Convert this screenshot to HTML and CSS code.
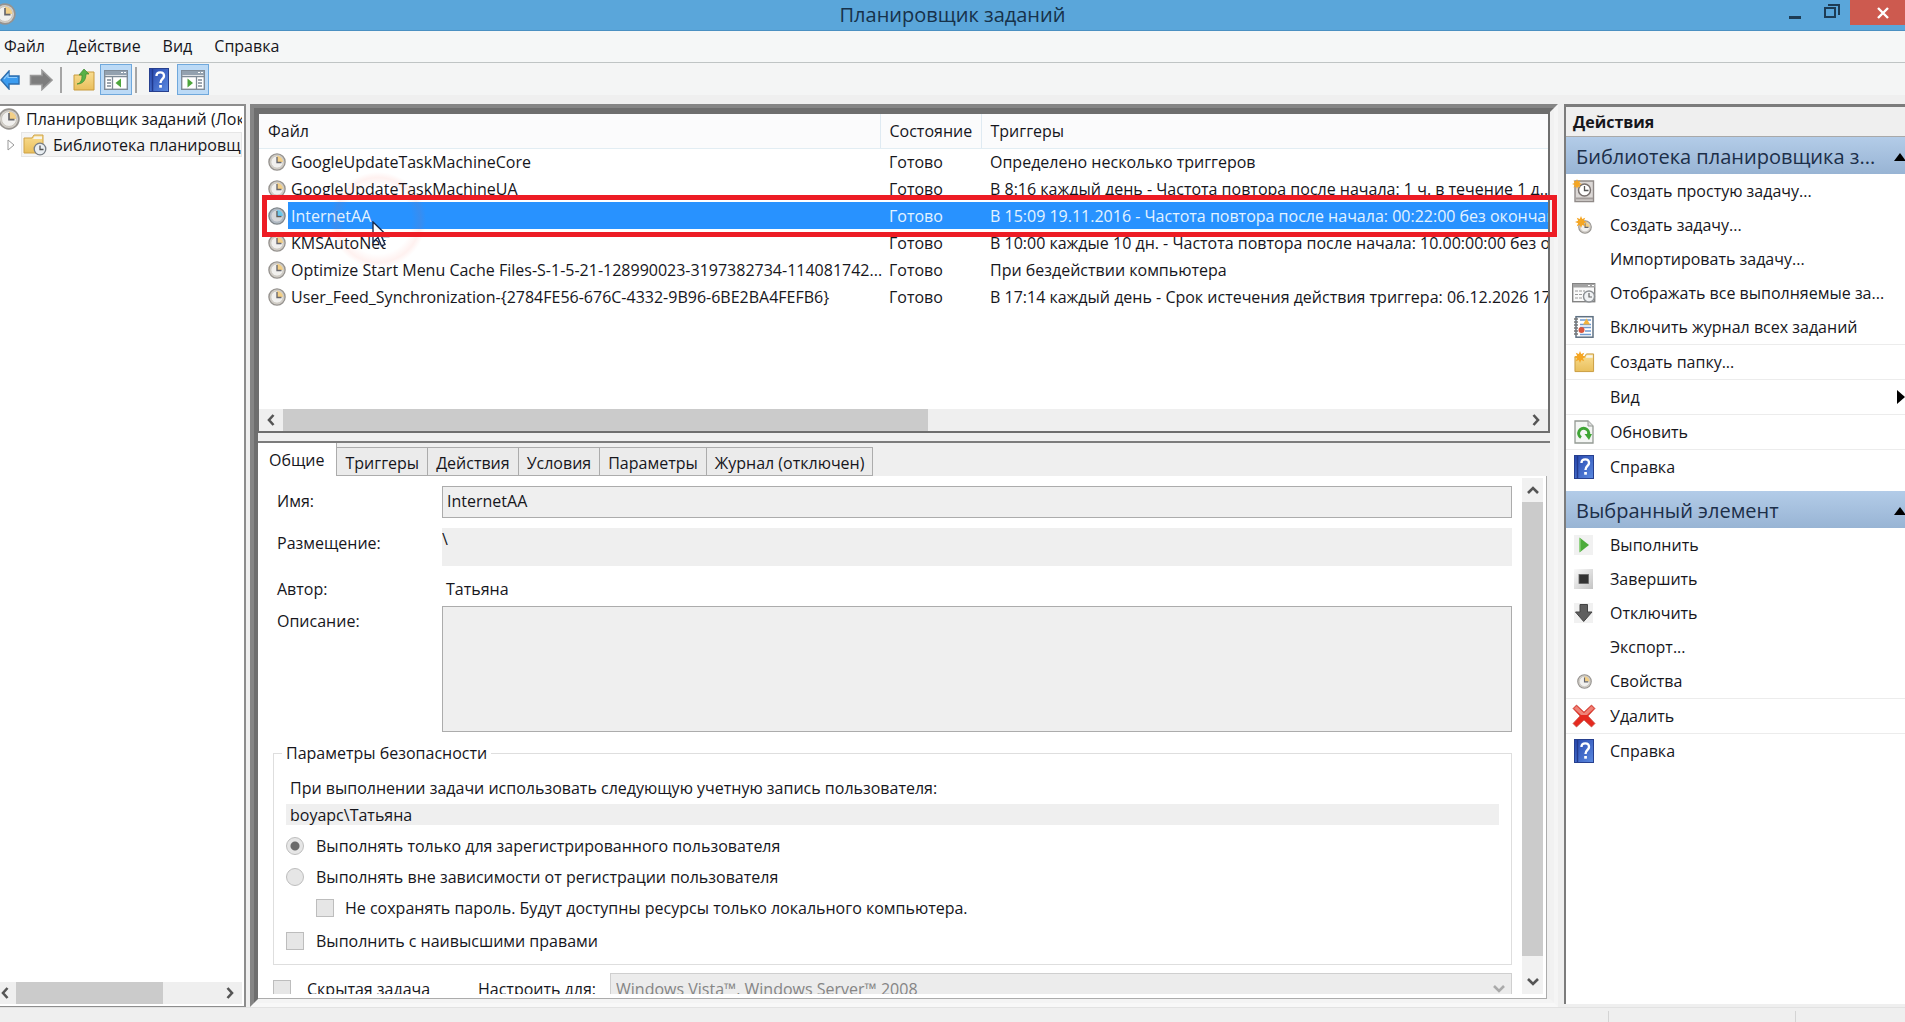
FILE: index.html
```html
<!DOCTYPE html>
<html lang="ru">
<head>
<meta charset="utf-8">
<title>Планировщик заданий</title>
<link rel="stylesheet" href="styles.css">
</head>
<body>
<svg class="sprite" aria-hidden="true">
  <defs>
    <linearGradient id="g-blue" x1="0" y1="0" x2="1" y2="1"><stop offset="0" stop-color="#2747ae"/><stop offset="1" stop-color="#5b8ae0"/></linearGradient>
    <linearGradient id="g-folder" x1="0" y1="0" x2="0" y2="1"><stop offset="0" stop-color="#f9dd90"/><stop offset="1" stop-color="#e9bf5c"/></linearGradient>
    <linearGradient id="g-tile" x1="0" y1="0" x2="1" y2="1"><stop offset="0" stop-color="#fafafa"/><stop offset="1" stop-color="#c4c4c4"/></linearGradient>
    <symbol id="clock" viewBox="0 0 20 20">
      <circle cx="10" cy="10" r="9" fill="#d3cfc9" stroke="#96938f" stroke-width="1.5"/>
      <circle cx="10" cy="10" r="6.8" fill="#f1f0ee" stroke="#c5c1ba" stroke-width=".8"/>
      <path d="M10 10V3.4A6.6 6.6 0 0 1 16.6 10z" fill="#f3cf86"/>
      <path d="M10 4.500V10.500H15" fill="none" stroke="#66666c" stroke-width="1.5"/>
    </symbol>
    <symbol id="star" viewBox="0 0 10 10">
      <path d="M5 0L6 2.600 8.500 1.500 7.400 4 10 5 7.400 6 8.500 8.500 6 7.400 5 10 4 7.400 1.500 8.500 2.600 6 0 5 2.600 4 1.500 1.500 4 2.600z" fill="#f5a623"/>
    </symbol>
    <symbol id="folder" viewBox="0 0 22 22">
      <path d="M1 5H11L13 2H20.500V20.500H1z" fill="url(#g-folder)" stroke="#c89b3e"/>
      <path d="M13.500 3.500H19.500V6H12z" fill="#f6f4ec"/>
    </symbol>
    <symbol id="help" viewBox="0 0 20 24">
      <rect x=".5" y=".5" width="19" height="23" fill="url(#g-blue)" stroke="#27408f"/>
      <path d="M3.500 1V23" stroke="#213a8e" stroke-width="1.500"/>
      <path d="M7.500 8C7.500 3.200 15 3.200 15 8C15 11 11.500 11 11.500 15" fill="none" stroke="#fff" stroke-width="2.400"/>
      <rect x="10.200" y="17" width="2.700" height="2.700" fill="#fff"/>
    </symbol>
    <symbol id="arrow-left" viewBox="0 0 20 20">
      <path d="M1 10L9 1V6H19V14H9V19z" fill="#3b9cf0" stroke="#2c6dae" stroke-width="1.400"/>
      <path d="M4 9L8 4.500V7.500H17" fill="none" stroke="#8fcbfb" stroke-width="1.200"/>
    </symbol>
    <symbol id="arrow-right" viewBox="0 0 24 22">
      <path d="M23 11L13 1.500V6.500H1.500V15.500H13V20.500z" fill="#7d7d7d" stroke="#999" stroke-width="1.600"/>
    </symbol>
    <symbol id="pane-left" viewBox="0 0 24 20">
      <rect x=".7" y=".7" width="22.600" height="18.600" fill="#fff" stroke="#7f8b97" stroke-width="1.400"/>
      <rect x="1" y="1" width="22" height="4" fill="#93a1af"/>
      <path d="M17 2.500H19M20 2.500H22" stroke="#fff"/>
      <path d="M1 6.500H23M8.500 7V19M3 10H7M3 13H7M3 16H7" stroke="#7f8b97" stroke-width="1.300"/>
      <path d="M17 8.500V17.500L11.500 13z" fill="#4ea63c"/>
    </symbol>
    <symbol id="pane-right" viewBox="0 0 24 20">
      <rect x=".7" y=".7" width="22.600" height="18.600" fill="#fff" stroke="#7f8b97" stroke-width="1.400"/>
      <rect x="1" y="1" width="22" height="4" fill="#93a1af"/>
      <path d="M17 2.500H19M20 2.500H22" stroke="#fff"/>
      <path d="M1 6.500H23M15.500 7V19M17 10H21M17 13H21M17 16H21" stroke="#7f8b97" stroke-width="1.300"/>
      <path d="M6.500 8.500V17.500L12 13z" fill="#4ea63c"/>
    </symbol>
    <symbol id="folder-up" viewBox="0 0 22 22">
      <path d="M1 6H11L13 3H21V21H1z" fill="url(#g-folder)" stroke="#c89b3e"/>
      <path d="M4 15C8 14 9 11 9 6H6L11 0 16 5H13C13 11 10 15 4 15z" fill="#58b147" stroke="#3c8b2f" stroke-width=".7"/>
    </symbol>
    <symbol id="folder-clock" viewBox="0 0 24 22">
      <path d="M1 4H9L11 1H20V19H1z" fill="url(#g-folder)" stroke="#cfa347"/>
      <path d="M11.500 2.500H19V5H10z" fill="#f6f4ec"/>
      <circle cx="17" cy="15" r="5.800" fill="#e9eef2" stroke="#777e86" stroke-width="1.300"/>
      <path d="M17 11.500V15.500H20.500" fill="none" stroke="#555" stroke-width="1.300"/>
    </symbol>
    <symbol id="task-basic" viewBox="0 0 24 24">
      <path d="M3 2H21.500V22.500H3z" fill="#dcd8d6" stroke="#908a88" stroke-width="1.400"/>
      <path d="M4 19.500H21" stroke="#a39d9b" stroke-width="2"/>
      <circle cx="12.500" cy="11" r="6" fill="#fff" stroke="#77706e" stroke-width="1.500"/>
      <path d="M12.500 7V11.500H16.500" fill="none" stroke="#555" stroke-width="1.300"/>
      <use href="#star" x="0" y="0" width="10" height="10"/>
    </symbol>
    <symbol id="task-new" viewBox="0 0 24 24">
      <use href="#clock" x="6" y="7" width="14" height="14"/>
      <use href="#star" x="3" y="3" width="12" height="12"/>
    </symbol>
    <symbol id="running" viewBox="0 0 24 24">
      <rect x=".7" y="2.700" width="22" height="18" fill="#fafafa" stroke="#838383" stroke-width="1.400"/>
      <rect x="1" y="3" width="22" height="3.500" fill="#a2a2a2"/>
      <path d="M16 4.500H18M20 4.500H22" stroke="#fff"/>
      <path d="M3 10H13M3 13.500H12M3 17H11" stroke="#999" stroke-width="1.200" stroke-dasharray="3 1"/>
      <circle cx="17" cy="15.500" r="5.500" fill="#f0f2f4" stroke="#8b8f93" stroke-width="1.400"/>
      <path d="M17 12V16H20" fill="none" stroke="#666" stroke-width="1.200"/>
    </symbol>
    <symbol id="journal" viewBox="0 0 24 24">
      <rect x="4" y="1.700" width="17" height="20.500" fill="#fff" stroke="#5f7183" stroke-width="1.500"/>
      <path d="M2 4H6M2 7H6M2 10H6M2 13H6M2 16H6M2 19H6" stroke="#777" stroke-width="1.300"/>
      <path d="M8 5H19M8 9.500H19M8 12.500H19M13 16H19M8 19.500H19" stroke="#6f9bd0" stroke-width="1.300"/>
      <path d="M14.500 3.500L18 9.500H11z" fill="#f4b43c"/>
      <circle cx="9.500" cy="15" r="3" fill="#d9563f"/>
    </symbol>
    <symbol id="folder-new" viewBox="0 0 24 24">
      <use href="#folder" x="2" y="2" width="21" height="21"/>
      <use href="#star" x="2" y="1" width="12" height="12"/>
    </symbol>
    <symbol id="refresh" viewBox="0 0 24 24">
      <path d="M3 1H16L21 6V23H3z" fill="#f4f6f4" stroke="#949a94" stroke-width="1.300"/>
      <path d="M16 1V6H21" fill="#ddd" stroke="#949a94"/>
      <path d="M9 17.500A5 5 0 1 1 16.500 14.500" fill="none" stroke="#3fa535" stroke-width="3"/>
      <path d="M12.500 14H20L17 20z" fill="#3fa535"/>
    </symbol>
    <symbol id="run" viewBox="0 0 24 24">
      <rect x="2" y="2" width="19" height="20" fill="#f1f1f1"/>
      <path d="M7.500 4.500L17 12 7.500 19.500z" fill="#4cab3a"/>
      <path d="M8 5.500V18.500" stroke="#8ed57e" stroke-width="1.200"/>
    </symbol>
    <symbol id="stop" viewBox="0 0 24 24">
      <rect x="2" y="2" width="19" height="20" fill="url(#g-tile)"/>
      <rect x="7" y="7.500" width="9.500" height="9" fill="#333" stroke="#666" stroke-width=".8"/>
    </symbol>
    <symbol id="disable" viewBox="0 0 24 24">
      <rect x="2" y="2" width="19" height="20" fill="#f1f1f1"/>
      <path d="M8 3.500H15.500V11H20L11.700 20.500 3.500 11H8z" fill="#5f5f5f" stroke="#444"/>
    </symbol>
    <symbol id="props" viewBox="0 0 24 24">
      <use href="#clock" x="5" y="5" width="15" height="15"/>
    </symbol>
    <symbol id="delete" viewBox="0 0 24 24">
      <path d="M4.500 1L12 8 19.500 1 23 4.500 16 12 23 19.500 19.500 23 12 16 4.500 23 1 19.500 8 12 1 4.500z" fill="#e5291f" stroke="#c9564a" stroke-width=".8"/>
      <path d="M4.500 2L12 9 19.500 2 22 4.500 15 11H9L2 4.500z" fill="#ee8378"/>
    </symbol>
    <symbol id="chev-left" viewBox="0 0 10 12"><path d="M7.500 1L3 6 7.500 11" fill="none" stroke="#555" stroke-width="2.600"/></symbol>
    <symbol id="chev-right" viewBox="0 0 10 12"><path d="M2.500 1L7 6 2.500 11" fill="none" stroke="#555" stroke-width="2.600"/></symbol>
    <symbol id="chev-up" viewBox="0 0 12 10"><path d="M1 8L6 3 11 8" fill="none" stroke="#555" stroke-width="2.600"/></symbol>
    <symbol id="chev-down" viewBox="0 0 12 10"><path d="M1 2L6 7 11 2" fill="none" stroke="currentColor" stroke-width="2.600"/></symbol>
  </defs>
</svg>

<header class="titlebar">
  <svg class="title-icon"><use href="#clock"/></svg>
  <h1>Планировщик заданий</h1>
  <div class="win-buttons">
    <button class="win-btn" aria-label="Свернуть"><svg width="12" height="16"><rect y="12" width="12" height="3" fill="#1d3c55"/></svg></button>
    <button class="win-btn" aria-label="Восстановить"><svg width="16" height="16"><path d="M4 1H15V11" fill="none" stroke="#1d3c55" stroke-width="2"/><rect x="1" y="4" width="10" height="9" fill="none" stroke="#1d3c55" stroke-width="2"/></svg></button>
    <button class="win-btn win-close" aria-label="Закрыть"><svg width="12" height="12"><path d="M1 1L11 11M11 1L1 11" stroke="#fff" stroke-width="2.400"/></svg></button>
  </div>
</header>

<nav class="menubar">
  <button>Файл</button><button>Действие</button><button>Вид</button><button>Справка</button>
</nav>

<div class="toolbar">
  <button class="tool tool-back" aria-label="Назад"><svg width="20" height="20"><use href="#arrow-left"/></svg></button>
  <button class="tool tool-forward" aria-label="Вперед"><svg width="24" height="22"><use href="#arrow-right"/></svg></button>
  <span class="tool-sep"></span>
  <button class="tool" aria-label="Вверх"><svg width="22" height="22"><use href="#folder-up"/></svg></button>
  <button class="tool tool-on" aria-label="Дерево консоли"><svg width="24" height="20"><use href="#pane-left"/></svg></button>
  <span class="tool-sep"></span>
  <button class="tool tool-help" aria-label="Справка"><svg width="20" height="24"><use href="#help"/></svg></button>
  <button class="tool tool-on" aria-label="Панель действий"><svg width="24" height="20"><use href="#pane-right"/></svg></button>
</div>

<main class="workspace">
  <aside class="tree">
    <ul class="tree-list">
      <li class="tree-root"><svg width="22" height="22"><use href="#clock"/></svg><span>Планировщик заданий (Локальный)</span></li>
      <li class="tree-child"><svg class="expander" width="8" height="12"><path d="M1 1L7 6 1 11z" fill="#fff" stroke="#999"/></svg><div class="tree-node"><svg width="24" height="22"><use href="#folder-clock"/></svg><span>Библиотека планировщ</span></div></li>
    </ul>
    <div class="hscroll">
      <button aria-label="Влево"><svg width="10" height="12"><use href="#chev-left"/></svg></button>
      <div class="track"><div class="thumb tree-thumb"></div></div>
      <button aria-label="Вправо"><svg width="10" height="12"><use href="#chev-right"/></svg></button>
    </div>
  </aside>

  <section class="center"><div class="bevel"><div class="bevel-inner">
    <div class="task-list">
      <table>
        <colgroup><col class="col-name"><col class="col-state"><col></colgroup>
        <thead><tr><th>Файл</th><th>Состояние</th><th>Триггеры</th></tr></thead>
        <tbody>
          <tr><td><svg><use href="#clock"/></svg>GoogleUpdateTaskMachineCore</td><td>Готово</td><td>Определено несколько триггеров</td></tr>
          <tr><td><svg><use href="#clock"/></svg>GoogleUpdateTaskMachineUA</td><td>Готово</td><td>В 8:16 каждый день - Частота повтора после начала: 1 ч. в течение 1 д..</td></tr>
          <tr class="selected"><td><svg><use href="#clock"/></svg>InternetAA</td><td>Готово</td><td>В 15:09 19.11.2016 - Частота повтора после начала: 00:22:00 без окончания</td></tr>
          <tr><td><svg><use href="#clock"/></svg>KMSAutoNet</td><td>Готово</td><td>В 10:00 каждые 10 дн. - Частота повтора после начала: 10.00:00:00 без окончания</td></tr>
          <tr><td><svg><use href="#clock"/></svg>Optimize Start Menu Cache Files-S-1-5-21-128990023-3197382734-114081742...</td><td>Готово</td><td>При бездействии компьютера</td></tr>
          <tr><td><svg><use href="#clock"/></svg>User_Feed_Synchronization-{2784FE56-676C-4332-9B96-6BE2BA4FEFB6}</td><td>Готово</td><td>В 17:14 каждый день - Срок истечения действия триггера: 06.12.2026 17:14:00</td></tr>
        </tbody>
      </table>
      <div class="hscroll">
        <button aria-label="Влево"><svg width="10" height="12"><use href="#chev-left"/></svg></button>
        <div class="track"><div class="thumb list-thumb"></div></div>
        <button aria-label="Вправо"><svg width="10" height="12"><use href="#chev-right"/></svg></button>
      </div>
    </div>

    <div class="details">
      <div class="tabs" role="tablist">
        <button class="tab tab-active" role="tab">Общие</button><button class="tab" role="tab">Триггеры</button><button class="tab" role="tab">Действия</button><button class="tab" role="tab">Условия</button><button class="tab" role="tab">Параметры</button><button class="tab" role="tab">Журнал (отключен)</button>
      </div>
      <div class="page">
        <form class="form">
          <div class="field field-name"><label for="name">Имя:</label><input id="name" value="InternetAA" readonly></div>
          <div class="field field-place"><label for="place">Размещение:</label><textarea id="place" readonly>\</textarea></div>
          <div class="field field-author"><label for="author">Автор:</label><output id="author">Татьяна</output></div>
          <div class="field field-desc"><label for="desc">Описание:</label><textarea id="desc" readonly></textarea></div>
          <fieldset>
            <legend>Параметры безопасности</legend>
            <label class="account-label" for="account">При выполнении задачи использовать следующую учетную запись пользователя:</label>
            <input id="account" class="account" value="boyapc\Татьяна" readonly>
            <label class="option"><input type="radio" name="logon" checked disabled>Выполнять только для зарегистрированного пользователя</label>
            <label class="option"><input type="radio" name="logon" disabled>Выполнять вне зависимости от регистрации пользователя</label>
            <label class="option option-sub"><input type="checkbox" disabled>Не сохранять пароль. Будут доступны ресурсы только локального компьютера.</label>
            <label class="option option-last"><input type="checkbox" disabled>Выполнить с наивысшими правами</label>
          </fieldset>
          <div class="configure">
            <label class="hidden-task"><input type="checkbox" disabled>Скрытая задача</label>
            <label for="target">Настроить для:</label>
            <div class="select-wrap"><select id="target" disabled><option>Windows Vista™, Windows Server™ 2008</option></select><svg width="12" height="10"><use href="#chev-down"/></svg></div>
          </div>
        </form>
        <div class="vscroll">
          <button aria-label="Вверх"><svg width="12" height="10"><use href="#chev-up"/></svg></button>
          <div class="vthumb"></div>
          <button aria-label="Вниз"><svg width="12" height="10"><use href="#chev-down"/></svg></button>
        </div>
      </div>
    </div>
  </div></div>
    <div class="halo"></div>
    <svg class="cursor" width="18" height="26" viewBox="0 0 18 26"><path d="M1 1V21L6 16.500 9.500 25 13 23.500 9.500 15.500H16z" fill="#fff" stroke="#1b2a4a" stroke-width="1.400"/></svg>
    <div class="highlight"></div>
  </section>

  <aside class="actions">
    <h2>Действия</h2>
    <h3><span>Библиотека планировщика з...</span><svg width="12" height="8"><path d="M6 0L12 8H0z"/></svg></h3>
    <ul class="group-top">
      <li><button><svg><use href="#task-basic"/></svg>Создать простую задачу...</button></li>
      <li><button><svg><use href="#task-new"/></svg>Создать задачу...</button></li>
      <li><button><svg></svg>Импортировать задачу...</button></li>
      <li><button><svg><use href="#running"/></svg>Отображать все выполняемые за...</button></li>
      <li><button><svg><use href="#journal"/></svg>Включить журнал всех заданий</button></li>
      <li class="ruled"><button><svg><use href="#folder-new"/></svg>Создать папку...</button></li>
      <li class="ruled"><button><svg></svg>Вид<svg class="more" viewBox="0 0 8 14"><path d="M0 0L8 7 0 14z"/></svg></button></li>
      <li class="ruled"><button><svg><use href="#refresh"/></svg>Обновить</button></li>
      <li class="ruled"><button><svg><use href="#help"/></svg>Справка</button></li>
    </ul>
    <h3><span>Выбранный элемент</span><svg width="12" height="8"><path d="M6 0L12 8H0z"/></svg></h3>
    <ul>
      <li><button><svg><use href="#run"/></svg>Выполнить</button></li>
      <li><button><svg><use href="#stop"/></svg>Завершить</button></li>
      <li><button><svg><use href="#disable"/></svg>Отключить</button></li>
      <li><button><svg></svg>Экспорт...</button></li>
      <li><button><svg><use href="#props"/></svg>Свойства</button></li>
      <li class="ruled"><button><svg><use href="#delete"/></svg>Удалить</button></li>
      <li class="ruled"><button><svg><use href="#help"/></svg>Справка</button></li>
    </ul>
  </aside>
</main>

<footer class="statusbar"><span></span><span></span><span></span></footer>
</body>
</html>
```
FILE: styles.css
```css
* { box-sizing: border-box; }

body {
  margin: 0;
  height: 100vh;
  display: flex;
  flex-direction: column;
  overflow: hidden;
  background: #efefef;
  color: #16161c;
  font: 16px/20px "Open Sans", "Noto Sans", sans-serif;
}

button, input, textarea, select {
  margin: 0;
  padding: 0;
  border: 0;
  border-radius: 0;
  background: none;
  color: inherit;
  font: inherit;
  appearance: none;
}

ul { margin: 0; padding: 0; list-style: none; }
h1, h2, h3 { margin: 0; font-weight: 400; }
.sprite { position: absolute; width: 0; height: 0; }

/* Title bar */
.titlebar {
  flex: none;
  display: grid;
  grid-template-columns: 1fr auto 1fr;
  align-items: start;
  height: 31px;
  background: #5aa6da;
  border-bottom: 1px solid #4a90c2;
}
.title-icon { width: 22px; height: 22px; margin: 3px 0 0 -6px; }
.titlebar h1 { font-size: 20px; line-height: 30px; color: #17324a; }
.win-buttons { display: flex; justify-content: flex-end; }
.win-btn { display: grid; place-items: center; width: 37px; height: 24px; }
.win-close { width: 55px; height: 25px; padding-left: 10px; background: #cd5a4f; }

/* Menu and toolbar */
.menubar {
  flex: none;
  display: flex;
  gap: 22px;
  height: 32px;
  padding: 0 4px 2px;
  background: #f5f7f7;
  border-bottom: 1px solid #bfc4c4;
}
.toolbar {
  flex: none;
  display: flex;
  align-items: center;
  height: 32px;
  padding-top: 1px;
  background: #f4f5f5;
}
.tool { display: grid; place-items: center; width: 32px; height: 31px; }
.tool-back { width: 20px; }
.tool-forward { margin-left: 5px; }
.tool-on { background: #bcdaf6; border: 1px solid #6fa8dc; }
.tool-sep { width: 2px; height: 26px; margin: 0 6px 0 3px; background: #a5a5a5; }
.tool-help { margin-right: 2px; }

/* Three columns */
.workspace {
  flex: 1;
  min-height: 0;
  display: grid;
  grid-template-columns: 246px minmax(0, 1fr) 341px;
  grid-template-rows: minmax(0, 1fr);
  gap: 4px;
  padding-top: 9px;
}

.tree {
  display: flex;
  flex-direction: column;
  min-width: 0;
  padding: 0 2px 2px 0;
  background: #fff;
  border: solid #8d8d8d;
  border-width: 2px 2px 1px 0;
}
.tree-list { flex: 1; overflow: hidden; white-space: nowrap; }
.tree-root { display: flex; align-items: center; gap: 6px; height: 26px; margin-left: -2px; }
.tree-child { display: flex; align-items: center; }
.expander { flex: none; margin: 0 6px 0 7px; }
.tree-list svg { flex: none; }
.tree-node {
  flex: 1;
  min-width: 0;
  display: flex;
  align-items: center;
  gap: 6px;
  height: 25px;
  padding-left: 1px;
  overflow: hidden;
  background: #f5f5f5;
  border: 1px solid #e6e6e6;
}

/* Scroll bars */
.hscroll { flex: none; display: flex; height: 22px; background: #efefef; }
.hscroll button { display: grid; place-items: center; width: 24px; }
.hscroll .track { flex: 1; }
.hscroll .thumb { height: 100%; background: #cbcbcb; }
.tree .hscroll button:first-child { width: 16px; padding-right: 8px; }
.tree-thumb { width: 73%; }
.list-thumb { width: 52%; }
.vscroll { flex: none; display: flex; flex-direction: column; width: 21px; background: #f1f1f1; color: #555; }
.vscroll button { display: grid; place-items: center; height: 24px; }
.vthumb { flex: 1; margin-bottom: 14px; background: #cbcbcb; }

/* Sunken frame around the middle column */
.center { position: relative; min-width: 0; min-height: 0; margin-right: 2px; }
.bevel { height: 100%; border: 4px solid; border-color: #858585 #f5f5f5 #f8f8f8 #858585; }
.bevel-inner {
  display: flex;
  flex-direction: column;
  height: 100%;
  border: 4px solid;
  border-color: #6e6e6e #f1f1f1 #f4f4f4 #6e6e6e;
}

.task-list {
  flex: none;
  display: flex;
  flex-direction: column;
  height: 321px;
  overflow: hidden;
  background: #fff;
  border: solid #6e6e6e;
  border-width: 2px 2px 2px 1px;
}
.task-list table { width: 100%; table-layout: fixed; border-collapse: collapse; margin-bottom: auto; }
.col-name { width: 621px; }
.col-state { width: 101px; }
.task-list th, .task-list td { padding: 0 0 0 9px; text-align: left; font-weight: 400; white-space: nowrap; overflow: hidden; }
.task-list th { height: 34px; background: #fbfbfc; border-bottom: 1px solid #e2edf3; }
.task-list th + th { border-left: 1px solid #dfeaf2; }
.task-list td { height: 27px; }
.task-list td:first-child { overflow: visible; }
.task-list td svg { width: 18px; height: 18px; margin-right: 5px; vertical-align: -3px; }
.task-list .selected { color: #e3f3ff; }
.task-list .selected td { background: #2892ff; }
.task-list .selected td:first-child { background: linear-gradient(90deg, #fff 29px, #2892ff 29px); }
.selected svg { filter: hue-rotate(170deg) saturate(2) brightness(.9); }

/* Task details */
.details { flex: 1; min-height: 0; display: flex; flex-direction: column; margin-top: 8px; border-top: 2px solid #7c7c7c; background: #efefef; }
.tabs { flex: none; display: flex; align-items: flex-end; height: 33px; }
.tab { height: 29px; padding: 2px 8px 0; border: 1px solid #acacac; border-left: 0; background: #ebebeb; }
.tab-active { height: 33px; padding: 0 12px 0 11px; background: #fff; border-width: 0 1px 0 0; }
.page {
  flex: 1;
  min-height: 0;
  display: flex;
  margin-right: 3px;
  padding: 2px 3px 4px 0;
  background: #fff;
  border: solid #acacac;
  border-width: 0 1px 1px 0;
}
.form { flex: 1; min-width: 0; padding: 8px 10px 0 15px; overflow: hidden; }
.field { display: grid; grid-template-columns: 165px minmax(0, 1fr); padding-left: 4px; }
.field input, .field textarea { display: block; width: 100%; resize: none; background: #efefef; overflow: hidden; }
.field label { align-self: start; }
.field-name { height: 42px; }
.field-name input { height: 32px; padding: 0 4px 2px; border: 1px solid #acacac; }
.field-name label { padding-top: 5px; }
.field-place { height: 51px; }
.field-place textarea { height: 38px; padding-top: 1px; }
.field-place label { padding-top: 5px; }
.field-author { height: 27px; }
.field-author output { padding-left: 4px; }
.field-desc { height: 126px; }
.field-desc label { padding-top: 5px; }
.field-desc textarea { height: 126px; border: 1px solid #acacac; }

fieldset { margin: 11px 0 0; padding: 15px 12px 0; border: 1px solid #dedede; height: 222px; min-width: 0; }
legend { margin-left: -4px; padding: 0 4px; }
.account-label { display: block; padding-left: 4px; }
.account { display: block; width: 100%; height: 21px; margin: 6px 0 5px; padding-left: 4px; background: #efefef; }
.option { display: flex; align-items: center; gap: 12px; height: 31px; }
.option-sub { padding-left: 30px; gap: 11px; }
.option-last { height: 36px; }
input[type="radio"], input[type="checkbox"] { flex: none; width: 18px; height: 18px; border: 1px solid #bdbdbd; background: #e6e6e6; }
input[type="radio"] { border-radius: 50%; }
input[type="radio"]:checked { background: radial-gradient(circle, #6b6b6b 4px, #e6e6e6 5px); }

.configure { display: flex; align-items: flex-start; padding-top: 8px; }
.configure label { padding-top: 6px; }
.hidden-task { display: flex; align-items: center; gap: 16px; width: 205px; }
.select-wrap { flex: 1; display: flex; align-items: center; height: 32px; margin-left: 14px; padding: 0 6px 0 5px; border: 1px solid #cfcfcf; background: #ececec; color: #aaa; }
.select-wrap select { flex: 1; color: #858585; opacity: 1; }

/* Pointer and callout drawn over the list */
.highlight { position: absolute; left: 12px; right: 1px; top: 91px; height: 42px; border: 5px solid #ed1c24; }
.halo { position: absolute; left: 78px; top: 66px; width: 100px; height: 100px; border-radius: 50%; background: radial-gradient(circle, transparent 48%, #ff503c14 60%, transparent 68%); }
.cursor { position: absolute; left: 122px; top: 117px; }

/* Actions pane */
.actions { overflow: hidden; margin-bottom: 3px; background: #fff; border: solid #7c7c7c; border-width: 3px 0 0 2px; }
.actions h2 { height: 30px; padding-left: 7px; font-size: 16px; font-weight: 700; line-height: 30px; background: #efefef; border-bottom: 1px solid #a9a9a9; }
.actions h3 { display: flex; align-items: center; justify-content: space-between; height: 37px; padding: 3px 0 0 10px; font-size: 20px; color: #1c2f49; background: linear-gradient(#b3cce8, #98b4d4); }
.actions h3 svg { fill: #000; margin-right: -1px; }
.actions li button { display: flex; align-items: center; gap: 14px; width: 100%; height: 34px; padding-left: 6px; }
.actions li svg { flex: none; width: 24px; height: 24px; }
.ruled { border-top: 1px solid #ececec; }
.group-top { padding-bottom: 7px; }
.actions li .more { width: 8px; height: 14px; margin-left: auto; }

/* Status bar */
.statusbar { flex: none; display: grid; grid-template-columns: minmax(0, 1fr) 187px 110px; height: 15px; padding-top: 3px; border-top: 1px solid #e2e2e2; }
.statusbar span + span { border-left: 1px solid #d4d4d4; }
```
